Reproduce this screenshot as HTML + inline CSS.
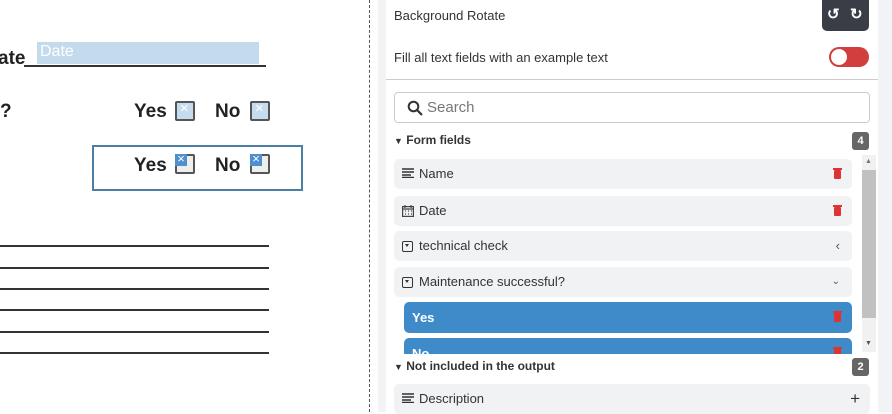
<!DOCTYPE html>
<html><head><style>
*{margin:0;padding:0;box-sizing:border-box}
body{width:892px;height:412px;overflow:hidden;background:#fff;font-family:"Liberation Sans",sans-serif;position:relative}
.a{position:absolute}
.doc{font-weight:bold;font-size:19px;color:#222}
.cb{position:absolute;width:20px;height:20px;border:2px solid #555;border-radius:2px;background:#c5dbee}
.row{position:absolute;left:394px;width:458px;height:30px;background:#f1f2f4;border-radius:5px;font-size:13px;color:#333;line-height:30px;padding-left:25px}
.ic{position:absolute;left:8px;top:9px}
.tr{position:absolute;right:11px;top:11px;width:7px;height:9px;background:#d33;border-radius:1px}
.tr:before{content:"";position:absolute;left:-1px;top:-2px;width:9px;height:1.5px;background:#d33}
</style></head><body>
<div class="a doc" style="left:-2px;top:48px">ate</div>
<div class="a" style="left:24px;top:65px;width:242px;height:2px;background:#333"></div>
<div class="a" style="left:37px;top:42px;width:222px;height:22px;background:#c4dbee;color:#fff;font-size:16px;padding-left:3px;line-height:20px">Date</div>
<div class="a doc" style="left:0;top:101px">?</div>
<div class="a doc" style="left:134px;top:101px">Yes</div>
<div class="cb" style="left:175px;top:101px"><span style="position:absolute;left:3px;top:-3px;color:#fff;font-size:15px">×</span></div>
<div class="a doc" style="left:215px;top:101px">No</div>
<div class="cb" style="left:250px;top:101px"><span style="position:absolute;left:3px;top:-3px;color:#fff;font-size:15px">×</span></div>
<div class="a" style="left:92px;top:145px;width:211px;height:46px;border:2px solid #4a7fa3"></div>
<div class="a doc" style="left:134px;top:155px">Yes</div>
<div class="cb" style="left:175px;top:154px;background:#eee"><span style="position:absolute;left:-2px;top:-2px;width:12px;height:12px;background:#4e8fd0;color:#fff;font-size:13px;line-height:10px;text-align:center">×</span></div>
<div class="a doc" style="left:215px;top:155px">No</div>
<div class="cb" style="left:250px;top:154px;background:#eee"><span style="position:absolute;left:-2px;top:-2px;width:12px;height:12px;background:#4e8fd0;color:#fff;font-size:13px;line-height:10px;text-align:center">×</span></div>
<div class="a" style="left:0;top:245px;width:269px;height:2px;background:#333"></div>
<div class="a" style="left:0;top:267px;width:269px;height:2px;background:#333"></div>
<div class="a" style="left:0;top:288px;width:269px;height:2px;background:#333"></div>
<div class="a" style="left:0;top:309px;width:269px;height:2px;background:#333"></div>
<div class="a" style="left:0;top:331px;width:269px;height:2px;background:#333"></div>
<div class="a" style="left:0;top:352px;width:269px;height:2px;background:#333"></div>
<div class="a" style="left:369px;top:0;width:0;height:412px;border-left:1px dashed #555"></div>
<div class="a" style="left:378px;top:0;width:514px;height:412px;background:#f2f3f5"></div>
<div class="a" style="left:386px;top:0;width:492px;height:412px;background:#fff"></div>
<div class="a" style="left:394px;top:8px;font-size:13px;color:#333">Background Rotate</div>
<div class="a" style="left:822px;top:0;width:47px;height:31px;background:#3a3d45;border-radius:0 0 5px 5px;color:#fff;font-size:15px;font-weight:bold;line-height:30px"><span style="position:absolute;left:5px">↺</span><span style="position:absolute;left:28px">↻</span></div>
<div class="a" style="left:394px;top:50px;font-size:13px;color:#333">Fill all text fields with an example text</div>
<div class="a" style="left:829px;top:47px;width:40px;height:20px;background:#d23d3d;border-radius:10px"><div style="position:absolute;left:2px;top:2px;width:16px;height:16px;border-radius:50%;background:#fff"></div></div>
<div class="a" style="left:386px;top:79px;width:492px;height:1px;background:#ccc"></div>
<div class="a" style="left:394px;top:92px;width:476px;height:31px;border:1px solid #ccc;border-radius:4px;font-size:15px;color:#777;line-height:29px;padding-left:32px">Search
<svg style="position:absolute;left:12px;top:7px" width="16" height="16" viewBox="0 0 16 16"><circle cx="6.5" cy="6.5" r="4.8" stroke="#333" stroke-width="2" fill="none"/><path d="M10 10l5 5" stroke="#333" stroke-width="2.2"/></svg></div>
<div class="a" style="left:394px;top:133px;font-size:12px;font-weight:bold;color:#333"><span style="font-size:9px">▼</span> Form fields</div>
<div class="a" style="left:852px;top:132px;width:17px;height:18px;background:#666;border-radius:3px;color:#fff;font-size:11px;font-weight:bold;text-align:center;line-height:18px">4</div>
<div class="row" style="top:159px"><svg class="ic" width="12" height="10" viewBox="0 0 12 10"><path d="M0 1h12M0 4h12M0 7h9M0 9.5h12" stroke="#333" stroke-width="1.4"/></svg>Name<div class="tr"></div></div>
<div class="row" style="top:196px"><svg class="ic" width="12" height="12" viewBox="0 0 12 12"><rect x="0.6" y="1.6" width="10.8" height="9.8" fill="none" stroke="#444" stroke-width="1.2"/><path d="M0 4h12M3 0v3M9 0v3M3 6h1M6 6h1M9 6h1M3 9h1M6 9h1M9 9h1" stroke="#444" stroke-width="1.2"/></svg>Date<div class="tr"></div></div>
<div class="row" style="top:231px"><span class="ic" style="width:11px;height:11px;border:1.5px solid #333;border-radius:2px;top:10px"><span style="position:absolute;left:2px;top:2px;border:2.5px solid transparent;border-top:3px solid #333"></span></span>technical check<span style="position:absolute;right:12px;color:#555">‹</span></div>
<div class="row" style="top:267px"><span class="ic" style="width:11px;height:11px;border:1.5px solid #333;border-radius:2px;top:10px"><span style="position:absolute;left:2px;top:2px;border:2.5px solid transparent;border-top:3px solid #333"></span></span>Maintenance successful?<span style="position:absolute;right:12px;color:#555;font-size:10px">⌄</span></div>
<div class="a" style="left:386px;top:298px;width:474px;height:56px;overflow:hidden">
<div class="a" style="left:18px;top:4px;width:448px;height:31px;background:#3f8bc9;border-radius:5px;color:#fff;font-weight:bold;font-size:13px;line-height:31px;padding-left:8px">Yes<div class="tr"></div></div>
<div class="a" style="left:18px;top:40px;width:448px;height:31px;background:#3f8bc9;border-radius:5px;color:#fff;font-weight:bold;font-size:13px;line-height:31px;padding-left:8px">No<div class="tr"></div></div>
</div>
<div class="a" style="left:862px;top:155px;width:14px;height:197px;background:#f1f1f1"></div>
<div class="a" style="left:862px;top:170px;width:14px;height:148px;background:#c1c1c1"></div>
<div class="a" style="left:865px;top:158px;font-size:7px;color:#777">▲</div>
<div class="a" style="left:865px;top:340px;font-size:7px;color:#555">▼</div>
<div class="a" style="left:394px;top:359px;font-size:12px;font-weight:bold;color:#333"><span style="font-size:9px">▼</span> Not included in the output</div>
<div class="a" style="left:852px;top:358px;width:17px;height:18px;background:#666;border-radius:3px;color:#fff;font-size:11px;font-weight:bold;text-align:center;line-height:18px">2</div>
<div class="row" style="top:384px;width:476px"><svg class="ic" width="12" height="10" viewBox="0 0 12 10"><path d="M0 1h12M0 4h12M0 7h9M0 9.5h12" stroke="#333" stroke-width="1.4"/></svg>Description<span style="position:absolute;right:10px;font-size:17px;color:#333">+</span></div>
</body></html>
